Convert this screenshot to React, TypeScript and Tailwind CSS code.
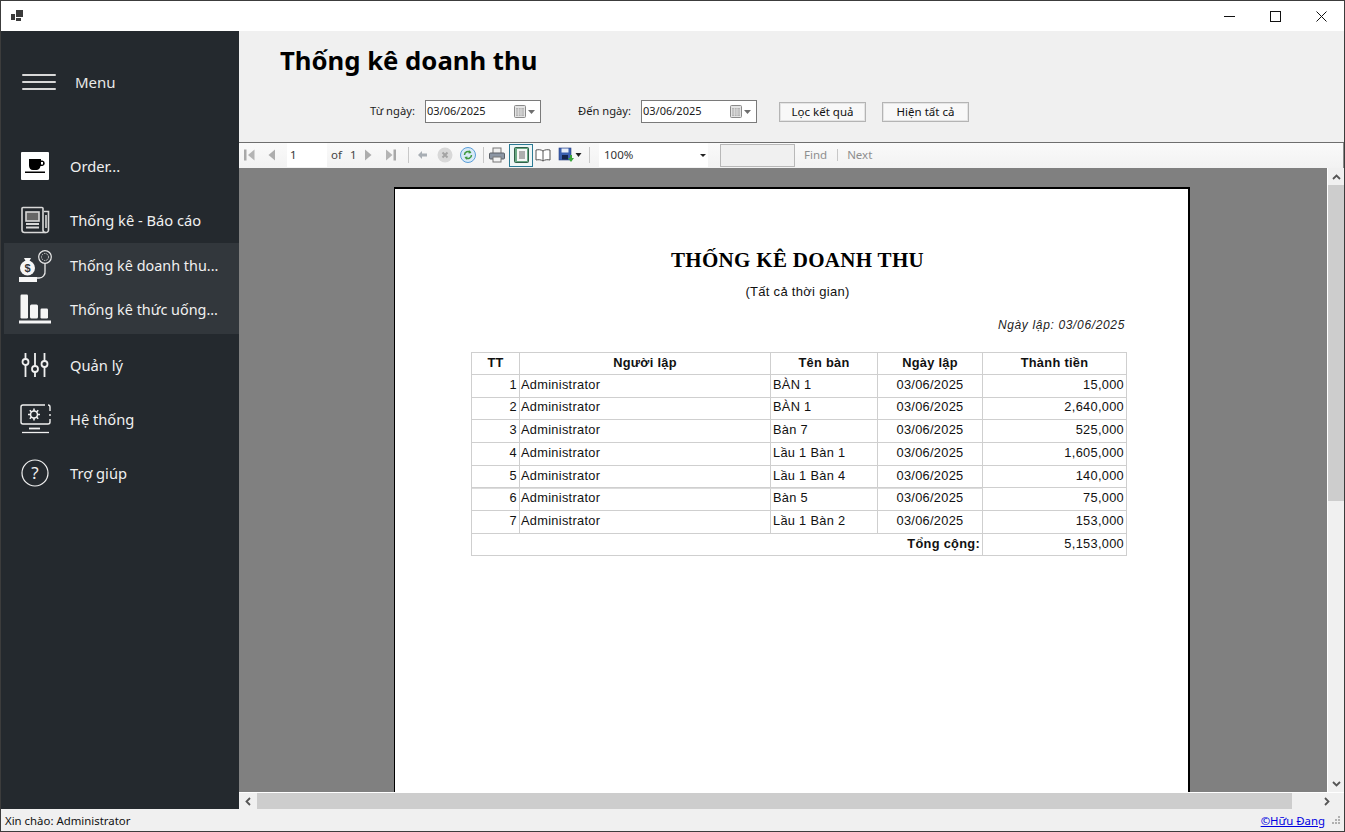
import React from "react";

const rows = [
  { n: "1", b: "BÀN 1", v: "15,000", h: "h-[23px]", pb: "pb-[2px]", thick: false },
  { n: "2", b: "BÀN 1", v: "2,640,000", h: "h-[22px]", pb: "pb-[3px]", thick: false },
  { n: "3", b: "Bàn 7", v: "525,000", h: "h-[23px]", pb: "pb-[2px]", thick: false },
  { n: "4", b: "Lầu 1 Bàn 1", v: "1,605,000", h: "h-[23px]", pb: "pb-[2px]", thick: false },
  { n: "5", b: "Lầu 1 Bàn 4", v: "140,000", h: "h-[22px]", pb: "pb-[2px]", thick: false },
  { n: "6", b: "Bàn 5", v: "75,000", h: "h-[23px]", pb: "pb-[3px]", thick: true },
  { n: "7", b: "Lầu 1 Bàn 2", v: "153,000", h: "h-[23px]", pb: "pb-[2px]", thick: false },
];

function MenuItem({ icon, label, h, active }: { icon: React.ReactNode; label: string; h: string; active?: boolean }) {
  return (
    <div className={`flex items-center ${h} ${active ? "pl-[14px]" : "pl-[17px]"}`}>
      <div className="w-[34px] h-[34px] flex items-center justify-center shrink-0">{icon}</div>
      <span className={`ml-[18px] ${active ? "text-[14.4px]" : "text-[14.7px]"} text-[#f0f0f0] whitespace-nowrap`}>{label}</span>
    </div>
  );
}

const Cup = () => (
  <svg width="28" height="28" viewBox="0 0 28 28">
    <rect width="28" height="28" rx="1" fill="#fff" />
    <path d="M8 7h12v1.500h1.500a2.800 2.800 0 0 1 0 5.500H19.500c-.5 2.500-2 4-4 4h-3.500C9.500 18 8 16 8 13.500z" fill="#000" />
    <rect x="20" y="10" width="2" height="2.500" fill="#fff" />
    <rect x="4" y="19.500" width="20" height="1.500" fill="#000" />
  </svg>
);
const News = () => (
  <svg width="30" height="28" viewBox="0 0 30 28" fill="none" stroke="#d8d8d8" strokeWidth="1.600">
    <path d="M23 4V2.500a1 1 0 0 0-1-1H3a1 1 0 0 0-1 1V24a2.500 2.500 0 0 0 2.500 2.500H26a2.500 2.500 0 0 0 2.500-2.500V5.500H24" />
    <path d="M23 4v20a2.500 2.500 0 0 0 2.500 2.500" />
    <rect x="6" y="6" width="13" height="9" fill="#666" />
    <path d="M6 18h13M6 21.500h13" strokeWidth="2.200" />
    <path d="M26 9v13" />
  </svg>
);
const Money = () => (
  <svg width="34" height="34" viewBox="0 0 34 34" fill="none">
    <circle cx="27" cy="8" r="6.300" stroke="#e8e8e8" strokeWidth="1.200" />
    <circle cx="27" cy="8" r="3.500" stroke="#cfcfcf" strokeWidth="1" strokeDasharray="1.500 1" />
    <path d="M27 14.500v7.500a6 6 0 0 1-6 7h-2" stroke="#e8e8e8" strokeWidth="1.300" />
    <circle cx="9.500" cy="19" r="7.500" fill="#f6f6f6" />
    <path d="M7.500 12h4l1.500-3H6z" fill="#f6f6f6" />
    <text x="9.500" y="23" fontSize="11" fontWeight="700" textAnchor="middle" fill="#32373c" fontFamily="Liberation Sans">$</text>
    <rect x="1" y="28" width="18" height="5" fill="#f6f6f6" />
  </svg>
);
const Bars = () => (
  <svg width="34" height="34" viewBox="0 0 34 34" fill="#f6f6f6">
    <rect x="2.500" y="1.500" width="7.500" height="24" rx="1.200" />
    <rect x="12" y="11.500" width="8" height="14" rx="1.500" />
    <rect x="22.500" y="15.500" width="7.500" height="10" rx="1.200" />
    <rect x="1" y="27.500" width="32" height="3" />
  </svg>
);
const Sliders = () => (
  <svg width="28" height="26" viewBox="0 0 28 26" fill="none" stroke="#f0f0f0" strokeWidth="1.800">
    <path d="M4.500 1v6M4.500 13v12M14 1v13M14 20v5M23.500 1v8M23.500 15v10" />
    <circle cx="4.500" cy="10" r="3" />
    <circle cx="14" cy="17" r="3" />
    <circle cx="23.500" cy="12" r="3" />
  </svg>
);
const Monitor = () => (
  <svg width="32" height="32" viewBox="0 0 32 32" fill="none" stroke="#f0f0f0" strokeWidth="1.400">
    <path d="M26 2H4a2 2 0 0 0-2 2v15a2 2 0 0 0 2 2h25a2 2 0 0 0 2-2v-3M31 13v-2M31 8V4a2 2 0 0 0-2-2" />
    <path d="M10 25.500h11" strokeWidth="1.800" />
    <path d="M3 29.500h27" strokeWidth="1.300" />
    <circle cx="15" cy="11.500" r="3.500" strokeWidth="1.600" />
    <path d="M15 5.500v2.500M15 15v2.500M9 11.500h2.500M18.500 11.500H21M10.800 7.300l1.700 1.700M17.500 14l1.700 1.700M10.800 15.700l1.700-1.700M17.500 9l1.700-1.700" strokeWidth="1.600" />
  </svg>
);
const Help = () => (
  <svg width="28" height="28" viewBox="0 0 28 28" fill="none">
    <circle cx="14" cy="14" r="13" stroke="#f0f0f0" strokeWidth="1.200" />
    <text x="14" y="20" fontSize="17" textAnchor="middle" fill="#f0f0f0" fontFamily="Noto Sans">?</text>
  </svg>
);

const First = () => (
  <svg width="12" height="14" viewBox="0 0 12 14"><rect x="0" y="1.500" width="2.500" height="11" fill="#a8a8a8" /><path d="M10.500 1.500v11L4 7z" fill="#b4b4b4" /></svg>
);
const Prev = () => (
  <svg width="10" height="14" viewBox="0 0 10 14"><path d="M8 1.500v11L1.500 7z" fill="#adadad" /></svg>
);
const Next = () => (
  <svg width="10" height="14" viewBox="0 0 10 14"><path d="M2 1.500v11L8.500 7z" fill="#adadad" /></svg>
);
const Last = () => (
  <svg width="12" height="14" viewBox="0 0 12 14"><rect x="8.500" y="1.500" width="2.500" height="11" fill="#a8a8a8" /><path d="M1 1.500v11L7.500 7z" fill="#b4b4b4" /></svg>
);
const Sep = () => <div className="w-px h-[16px] bg-[#c8c8c8]" />;

const Calendar = () => (
  <div className="flex items-center gap-[2px]">
    <svg width="12" height="13" viewBox="0 0 12 13">
      <rect x=".5" y=".5" width="11" height="12" rx="1" fill="#e4e4e4" stroke="#8a8a8a" />
      <rect x="2" y="3" width="8" height="8" fill="#b4b4b4" />
      <path d="M2 5h8M2 7h8M2 9h8M4.500 3v8M7 3v8" stroke="#e8e8e8" strokeWidth=".6" />
    </svg>
    <svg width="7" height="4" viewBox="0 0 7 4"><path d="M0 0h7L3.500 4z" fill="#6e6e6e" /></svg>
  </div>
);

function DateBox({ value }: { value: string }) {
  return (
    <div className="w-[116px] h-[23px] border border-[#7a7a7a] bg-white flex items-center pl-[1px] pr-[5px] justify-between">
      <span className="text-[11px] text-[#1a1a1a]">{value}</span>
      <Calendar />
    </div>
  );
}

function Btn({ label }: { label: string }) {
  return (
    <div className="w-[87px] h-[20px] bg-[#f8f8f8] border border-[#b4b4b4] shadow-[inset_0_0_0_1px_#e4e4e4] flex items-center justify-center text-[11.5px] text-[#111]">
      {label}
    </div>
  );
}

function Row({ h, className = "", children }: { h: string; className?: string; children: React.ReactNode }) {
  return <div className={`flex ${h} border-b border-[#cfcfcf] ${className}`}>{children}</div>;
}

export default function App() {
  return (
    <div className="w-[1345px] h-[832px] overflow-hidden bg-[#f0f0f0] border border-[#3c3c3c] flex flex-col font-['Noto_Sans',sans-serif]">
      <div className="h-[30px] bg-white flex items-center justify-between shrink-0">
        <svg className="ml-[10px]" width="13" height="12" viewBox="0 0 13 12" fill="#3a3a3a">
          <rect x="0" y="4" width="4" height="6" />
          <rect x="5" y="0" width="7" height="7" />
          <rect x="5" y="8" width="5" height="3" />
        </svg>
        <div className="flex items-center">
          <div className="w-[46px] flex justify-center">
            <svg width="11" height="11" viewBox="0 0 11 11"><path d="M0 5.500h11" stroke="#111" strokeWidth="1" /></svg>
          </div>
          <div className="w-[46px] flex justify-center">
            <svg width="11" height="11" viewBox="0 0 11 11"><rect x=".5" y=".5" width="10" height="10" fill="none" stroke="#111" /></svg>
          </div>
          <div className="w-[46px] flex justify-center">
            <svg width="11" height="11" viewBox="0 0 11 11"><path d="M.5.500l10 10M10.500.500l-10 10" stroke="#111" /></svg>
          </div>
        </div>
      </div>

      <div className="flex flex-1 min-h-0">
        <div className="w-[238px] shrink-0 bg-[#24292e] flex flex-col">
          <div className="h-[52px] mt-[25px] flex items-center pl-[21px]">
            <div className="w-[34px] flex flex-col gap-[5px]">
              <div className="h-[2px] bg-[#d8d8d8] rounded" />
              <div className="h-[2px] bg-[#d8d8d8] rounded" />
              <div className="h-[2px] bg-[#d8d8d8] rounded" />
            </div>
            <span className="ml-[19px] text-[15px] text-[#e8e8e8]">Menu</span>
          </div>
          <div className="mt-[31px]">
            <MenuItem icon={<Cup />} label="Order..." h="h-[54px]" />
            <MenuItem icon={<News />} label="Thống kê - Báo cáo" h="h-[50px] pt-[4px]" />
            <div className="bg-[#32373c] ml-[3px] h-[91px] flex flex-col">
              <MenuItem icon={<Money />} label="Thống kê doanh thu..." h="h-[45px] pt-[1px]" active />
              <MenuItem icon={<Bars />} label="Thống kê thức uống..." h="h-[42px] pt-[1px]" active />
            </div>
            <div className="mt-[4px]">
              <MenuItem icon={<Sliders />} label="Quản lý" h="h-[54px]" />
              <MenuItem icon={<Monitor />} label="Hệ thống" h="h-[54px]" />
              <MenuItem icon={<Help />} label="Trợ giúp" h="h-[54px]" />
            </div>
          </div>
        </div>

        <div className="flex-1 min-w-0 flex flex-col">
          <div className="h-[112px] shrink-0 bg-[#f0f0f0] border-b border-[#6e6e6e]">
            <h1 className="ml-[41px] mt-[11px] text-[25.7px] leading-[38px] font-bold text-black whitespace-nowrap">Thống kê doanh thu</h1>
            <div className="flex items-center mt-[20px] ml-[131px]">
              <span className="text-[11.2px] text-[#222] w-[45px] whitespace-nowrap">Từ ngày:</span>
              <div className="ml-[10px]"><DateBox value="03/06/2025" /></div>
              <span className="ml-[37px] text-[11.2px] text-[#222] w-[53px] whitespace-nowrap">Đến ngày:</span>
              <div className="ml-[10px]"><DateBox value="03/06/2025" /></div>
              <div className="ml-[22px]"><Btn label="Lọc kết quả" /></div>
              <div className="ml-[16px]"><Btn label="Hiện tất cả" /></div>
            </div>
          </div>

          <div className="h-[25px] shrink-0 bg-gradient-to-b from-[#fafafa] to-[#f2f2f2] border-r border-[#8a8a8a] flex items-center pl-[5px] pb-[1px] text-[11.5px]">
            <First />
            <div className="ml-[11px]"><Prev /></div>
            <div className="ml-[10px] w-[40px] h-[24px] bg-white flex items-center pl-[3px] text-[#333]">1</div>
            <span className="ml-[4px] w-[12px] text-[#444]">of</span>
            <span className="ml-[7px] w-[7px] text-[#444]">1</span>
            <div className="ml-[6px]"><Next /></div>
            <div className="ml-[12px]"><Last /></div>
            <div className="ml-[11px]"><Sep /></div>
            <svg className="ml-[8px]" width="11" height="12" viewBox="0 0 11 12"><path d="M1 6l4-4v2.500h5v3H5V10z" fill="#a8aeb4" /></svg>
            <svg className="ml-[9px]" width="16" height="16" viewBox="0 0 16 16">
              <circle cx="8" cy="8" r="7.500" fill="#d8d8d8" />
              <path d="M5.500 5.500l5 5M10.500 5.500l-5 5" stroke="#a4a4a4" strokeWidth="2" />
            </svg>
            <svg className="ml-[7px]" width="16" height="16" viewBox="0 0 16 16">
              <circle cx="8" cy="8" r="7.500" fill="#d8eaf8" stroke="#5a9ed8" />
              <path d="M4.500 8a3.500 3.500 0 0 1 6-2.500" fill="none" stroke="#3f9a3f" strokeWidth="1.500" />
              <path d="M11.500 8a3.500 3.500 0 0 1-6 2.500" fill="none" stroke="#3f9a3f" strokeWidth="1.500" />
              <path d="M9 3l2.500 3-3 .5zM7 13l-2.500-3 3-.5z" fill="#3f9a3f" />
            </svg>
            <div className="ml-[7px]"><Sep /></div>
            <svg className="ml-[5px]" width="16" height="16" viewBox="0 0 16 16">
              <rect x="4" y="1" width="8" height="6" fill="#f0f0f0" stroke="#777" />
              <rect x=".5" y="6" width="15" height="6" rx="1" fill="#8c96a4" stroke="#5a5f66" />
              <rect x="4" y="10" width="8" height="5" fill="#f4f4f4" stroke="#777" />
            </svg>
            <div className="ml-[4px] w-[24px] h-[23px] border border-[#2a7a94] bg-[#eef6f6] flex items-center justify-center">
              <svg width="15" height="16" viewBox="0 0 15 16">
                <rect x=".5" y=".5" width="14" height="15" rx="1" fill="#6aa884" stroke="#2f5f48" />
                <rect x="3" y="2" width="10" height="12" fill="#f6f6f6" />
                <path d="M5 5h6M5 7h6M5 9h6M5 11h6" stroke="#666" />
              </svg>
            </div>
            <svg className="ml-[2px]" width="16" height="14" viewBox="0 0 16 14" fill="#fff" stroke="#555">
              <path d="M8 3C6 1.500 3.500 1.500 1 2v10c2.500-.5 5-.5 7 1 2-1.500 4.500-1.500 7-1V2c-2.500-.5-5-.5-7 1zM8 3v10" />
            </svg>
            <svg className="ml-[7px]" width="17" height="16" viewBox="0 0 17 16">
              <rect x="1" y="1" width="12" height="12" fill="#3a5fb0" stroke="#2a4080" strokeWidth=".6" />
              <rect x="3.500" y="1.500" width="7" height="4" fill="#e8eef8" />
              <rect x="4" y="8" width="6" height="4.500" fill="#14244c" />
              <path d="M12 8h2v3h2l-3 4-3-4h2z" fill="#3aa53a" />
            </svg>
            <svg width="7" height="4" viewBox="0 0 7 4"><path d="M.5 0h6L3.500 4z" fill="#222" /></svg>
            <div className="ml-[7px]"><Sep /></div>
            <div className="ml-[9px] w-[109px] h-[24px] bg-white flex items-center justify-between pl-[5px] pr-[2px] text-[#333]">
              <span>100%</span>
              <svg width="6" height="3" viewBox="0 0 6 3"><path d="M0 0h6L3 3z" fill="#222" /></svg>
            </div>
            <div className="ml-[12px] w-[75px] h-[23px] bg-[#f0f0f0] border border-[#b8b8b8]" />
            <span className="ml-[9px] text-[#8e8e8e]">Find</span>
            <div className="ml-[10px] w-px h-[12px] bg-[#c8c8c8]" />
            <span className="ml-[9px] text-[#8e8e8e]">Next</span>
          </div>

          <div className="flex-1 min-h-0 flex flex-col">
            <div className="flex-1 min-h-0 flex">
              <div className="flex-1 min-w-0 bg-[#808080] overflow-hidden pt-[19px] pl-[155px]">
                <div className="w-[796px] h-[900px] bg-white border-2 border-l border-black flex flex-col font-['Liberation_Sans',sans-serif] text-[#111]">
                  <div className="mt-[57px] text-center font-['Liberation_Serif',serif] font-bold text-[21px] leading-[28px] tracking-[0.3px] pl-[12px] text-black">
                    THỐNG KÊ DOANH THU
                  </div>
                  <div className="mt-[9px] text-center text-[13px] leading-[18px] tracking-[0.3px] pl-[12px]">(Tất cả thời gian)</div>
                  <div className="mt-[15px] mr-[63px] text-right text-[12px] leading-[18px] italic tracking-[0.65px] text-[#222]">Ngày lập: 03/06/2025</div>
                  <div className="mt-[18px] ml-[76px] w-[656px] text-[12.8px] tracking-[0.3px] border border-[#cfcfcf] border-b-0">
                    <Row h="h-[22px]" className="font-bold">
                      <div className="w-[48px] border-r border-[#cfcfcf] flex items-center justify-center pb-[2px]">TT</div>
                      <div className="w-[251px] border-r border-[#cfcfcf] flex items-center justify-center pb-[2px]">Người lập</div>
                      <div className="w-[107px] border-r border-[#cfcfcf] flex items-center justify-center pb-[2px]">Tên bàn</div>
                      <div className="w-[105px] border-r border-[#cfcfcf] flex items-center justify-center pb-[2px]">Ngày lập</div>
                      <div className="flex-1 flex items-center justify-center pb-[2px]">Thành tiền</div>
                    </Row>
                    {rows.map((r) => (
                      <Row key={r.n} h={r.h}>
                        <div className={`w-[48px] border-r border-[#cfcfcf] flex items-center justify-end pr-[2px] ${r.pb} ${r.thick ? "border-t border-t-[#dcdcdc]" : ""}`}>{r.n}</div>
                        <div className={`w-[251px] border-r border-[#cfcfcf] flex items-center pl-[1px] ${r.pb} ${r.thick ? "border-t border-t-[#dcdcdc]" : ""}`}>Administrator</div>
                        <div className={`w-[107px] border-r border-[#cfcfcf] flex items-center pl-[2px] ${r.pb} ${r.thick ? "border-t border-t-[#dcdcdc]" : ""}`}>{r.b}</div>
                        <div className={`w-[105px] border-r border-[#cfcfcf] flex items-center justify-center ${r.pb} ${r.thick ? "border-t border-t-[#dcdcdc]" : ""}`}>03/06/2025</div>
                        <div className={`flex-1 flex items-center justify-end pr-[2px] ${r.pb}`}>{r.v}</div>
                      </Row>
                    ))}
                    <Row h="h-[22px]">
                      <div className="w-[511px] border-r border-[#cfcfcf] flex items-center justify-end pr-[2px] pb-[2px] font-bold">Tổng cộng:</div>
                      <div className="flex-1 flex items-center justify-end pr-[2px] pb-[2px]">5,153,000</div>
                    </Row>
                  </div>
                </div>
              </div>
              <div className="w-[17px] bg-[#f0f0f0] flex flex-col items-center border-l border-white">
                <div className="h-[17px] flex items-center justify-center">
                  <svg width="9" height="6" viewBox="0 0 9 6" fill="none"><path d="M1 5l3.500-3.500L8 5" stroke="#555" strokeWidth="1.800" /></svg>
                </div>
                <div className="w-full h-[316px] bg-[#cdcdcd]" />
                <div className="flex-1" />
                <div className="h-[17px] flex items-center justify-center">
                  <svg width="9" height="6" viewBox="0 0 9 6" fill="none"><path d="M1 1l3.500 3.500L8 1" stroke="#555" strokeWidth="1.800" /></svg>
                </div>
              </div>
            </div>
            <div className="h-[17px] shrink-0 bg-[#f0f0f0] flex items-center border-t border-white">
              <div className="w-[18px] flex justify-center">
                <svg width="6" height="9" viewBox="0 0 6 9" fill="none"><path d="M5 1L1.500 4.500 5 8" stroke="#555" strokeWidth="1.800" /></svg>
              </div>
              <div className="w-[1035px] h-full bg-[#cdcdcd]" />
              <div className="flex-1" />
              <div className="w-[34px] flex justify-center">
                <svg width="6" height="9" viewBox="0 0 6 9" fill="none"><path d="M1 1l3.500 3.500L1 8" stroke="#555" strokeWidth="1.800" /></svg>
              </div>
            </div>
          </div>
        </div>
      </div>

      <div className="h-[22px] shrink-0 bg-[#f0f0f0] flex items-center justify-between pl-[4px] pt-[1px] text-[11.4px] text-[#111]">
        <span>Xin chào: Administrator</span>
        <div className="flex items-center">
          <span className="text-[#0000e0] underline">©Hữu Đang</span>
          <svg className="ml-[7px] mr-[3px]" width="9" height="9" viewBox="0 0 9 9" fill="#b0b0b0">
            <rect x="6" y="0" width="2" height="2" />
            <rect x="3" y="3" width="2" height="2" />
            <rect x="6" y="3" width="2" height="2" />
            <rect x="0" y="6" width="2" height="2" />
            <rect x="3" y="6" width="2" height="2" />
            <rect x="6" y="6" width="2" height="2" />
          </svg>
        </div>
      </div>
    </div>
  );
}
